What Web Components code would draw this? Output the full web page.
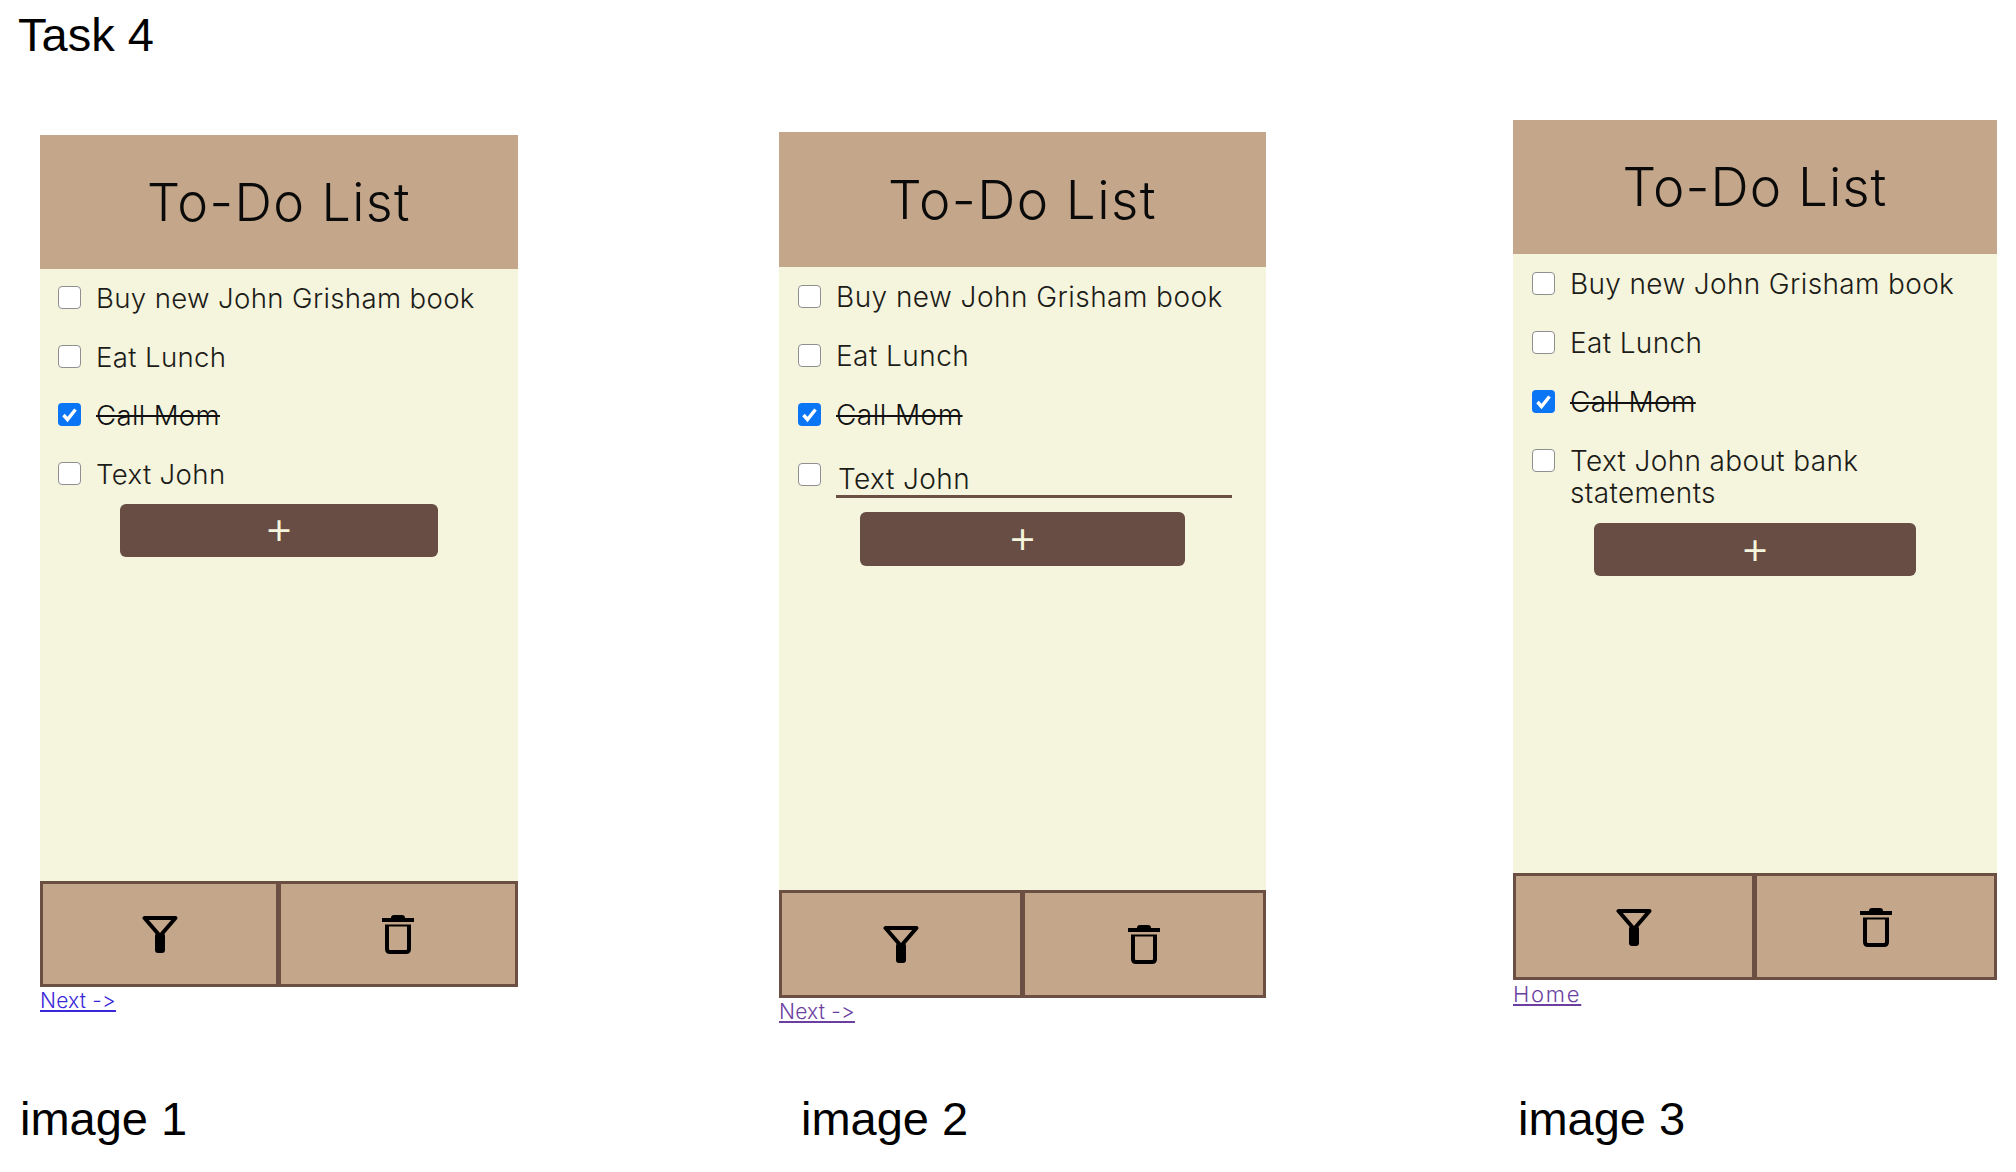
<!DOCTYPE html>
<html lang="en">

<head>
    <meta charset="UTF-8" />
    <title>Task 4</title>
    <style>
        html, body { margin: 0; background: #fff; }
    </style>
</head>

<body>
    <task-page heading="Task 4">
        <shot-column label="image 1" style="--col: 779px; --top: 15px; --label-x: 20px;">
            <todo-screen style="--w: 478px; --h: 852px; --head: 134px; --foot: 106px; --gap: 26.5px; --list-top: 13px; --inset: 18px; --btn: 318px; --btn-h: 53px; --title: 52px; --title-ls: 1.4px; --item: 27.6px; --item-ls: 0.35px;">
                <todo-item>Buy new John Grisham book</todo-item>
                <todo-item>Eat Lunch</todo-item>
                <todo-item checked>Call Mom</todo-item>
                <todo-item>Text John</todo-item>
                <a slot="link" href="#next">Next -&gt;</a>
            </todo-screen>
        </shot-column>
        <shot-column label="image 2" style="--col: 734px; --top: 12px; --label-x: 22px;">
            <todo-screen visited style="--w: 487px; --h: 866px; --head: 135px; --foot: 108px; --gap: 27px; --list-top: 14px; --inset: 19px; --btn: 325px; --btn-h: 54px; --title: 53px; --title-ls: 1.4px; --item: 28px; --item-ls: 0.45px;">
                <todo-item>Buy new John Grisham book</todo-item>
                <todo-item>Eat Lunch</todo-item>
                <todo-item checked>Call Mom</todo-item>
                <todo-item editing>Text John</todo-item>
                <a slot="link" href="#next">Next -&gt;</a>
            </todo-screen>
        </shot-column>
        <shot-column label="image 3" style="--col: 503px; --top: 0px; --label-x: 5px;">
            <todo-screen visited style="--w: 484px; --h: 860px; --head: 134px; --foot: 107px; --gap: 27px; --list-top: 14px; --inset: 19px; --btn: 322px; --btn-h: 53px; --title: 53px; --title-ls: 1px; --item: 28px; --item-ls: 0.35px;">
                <todo-item>Buy new John Grisham book</todo-item>
                <todo-item>Eat Lunch</todo-item>
                <todo-item checked>Call Mom</todo-item>
                <todo-item>Text John about bank statements</todo-item>
                <a slot="link" href="#home" style="font-size: 22px; letter-spacing: 1.75px;">Home</a>
            </todo-screen>
        </shot-column>
    </task-page>

    <template id="page-template">
        <style>
            :host {
                display: block;
                width: 2016px;
                height: 1172px;
                overflow: hidden;
                font-family: "Liberation Sans", Arial, sans-serif;
                color: #000;
            }

            h1 {
                margin: 0;
                height: 120px;
                padding: 9px 0 0 18px;
                box-sizing: border-box;
                font-size: 47px;
                line-height: 52px;
                font-weight: 400;
            }

            .row {
                display: flex;
                align-items: stretch;
                height: 1026px;
            }
        </style>
        <h1></h1>
        <div class="row"><slot></slot></div>
    </template>

    <template id="column-template">
        <style>
            :host {
                display: flex;
                flex-direction: column;
                justify-content: space-between;
                width: var(--col);
                padding-top: var(--top);
                box-sizing: border-box;
            }

            :host(:first-child) {
                padding-left: 40px;
            }

            .label {
                margin-left: var(--label-x);
                font-size: 47px;
                line-height: 54px;
            }

            :host(:first-child) .label {
                margin-left: -20px;
            }
        </style>
        <div><slot></slot></div>
        <div class="label"></div>
    </template>

    <template id="screen-template">
        <style>
            :host {
                display: block;
                width: var(--w);
                font-family: Inter, "Open Sans", sans-serif;
            }

            .phone {
                display: flex;
                flex-direction: column;
                height: var(--h);
                background: #f5f4dd;
            }

            header {
                flex: none;
                height: var(--head);
                display: flex;
                align-items: center;
                justify-content: center;
                background: #c4a68a;
                font-size: var(--title);
                font-weight: 300;
                letter-spacing: var(--title-ls);
                color: #0a0a0a;
            }

            main {
                flex: 1;
                display: flex;
                flex-direction: column;
                gap: var(--gap);
                padding-top: var(--list-top);
                padding-left: var(--inset);
                padding-right: 30px;
                font-size: var(--item);
                letter-spacing: var(--item-ls);
            }

            .add {
                flex: none;
                align-self: center;
                /* the list padding is lopsided, so pull the button back to the centre */
                position: relative;
                left: calc((30px - var(--inset)) / 2);
                margin-top: calc(14px - var(--gap));
                width: var(--btn);
                height: var(--btn-h);
                display: flex;
                align-items: center;
                justify-content: center;
                border: 0;
                padding: 0 0 6px;
                border-radius: 6px;
                background: #674d43;
                color: #f5f4dd;
                font-family: Inter, sans-serif;
                font-weight: 300;
                font-size: 46px;
                line-height: 46px;
            }

            todo-toolbar {
                height: var(--foot);
            }

            ::slotted(a) {
                display: block;
                width: max-content;
                margin-top: 2px;
                font-size: 21px;
                line-height: 24px;
                font-weight: 300;
                letter-spacing: 0.2px;
                font-variant-ligatures: none;
                font-feature-settings: "calt" 0;
                color: #3a27d8;
            }

            :host([visited]) ::slotted(a) {
                color: #6b3fa0;
            }
        </style>
        <div class="phone">
            <header>To-Do List</header>
            <main>
                <slot></slot>
                <button class="add">+</button>
            </main>
            <todo-toolbar></todo-toolbar>
        </div>
        <slot name="link"></slot>
    </template>

    <template id="item-template">
        <style>
            :host {
                display: flex;
                align-items: flex-start;
                gap: 15px;
                line-height: 32px;
                font-weight: 300;
                color: #1c1c18;
            }

            .box {
                flex: none;
                width: 23px;
                height: 23px;
                margin-top: 4px;
                box-sizing: border-box;
                display: flex;
                border: 1.5px solid #8f8f8f;
                border-radius: 4px;
                background: #fff;
            }

            svg {
                display: none;
                width: 100%;
                height: 100%;
            }

            :host([checked]) .box {
                border: 0;
                background: #0a76f6;
            }

            :host([checked]) svg {
                display: block;
            }

            :host([checked]) .text {
                text-decoration: line-through;
                text-decoration-thickness: 2px;
                color: #111;
            }

            :host([editing]) .box {
                margin-top: 5px;
            }

            :host([editing]) .text {
                flex: 1;
                margin-right: 4px;
                padding: 5px 0 0 2px;
                border-bottom: 3px solid #6b4f43;
            }
        </style>
        <span class="box">
            <svg viewBox="0 0 23 23"><path d="M5.5 12l4 4.5 8-10" fill="none" stroke="#fff" stroke-width="3.4" /></svg>
        </span>
        <span class="text"><slot></slot></span>
    </template>

    <template id="toolbar-template">
        <style>
            :host {
                flex: none;
                display: grid;
                grid-template-columns: 1fr 1fr;
                background: #c4a68a;
            }

            div {
                display: flex;
                align-items: center;
                justify-content: center;
                border: 3px solid #6b4f43;
            }

            div + div {
                border-left-width: 2px;
            }

            svg {
                display: block;
            }
        </style>
        <div>
            <svg width="36" height="38" viewBox="0 0 36 38">
                <path d="M2.5 3h31L18 21z" fill="none" stroke="#000" stroke-width="4" stroke-linejoin="round" />
                <rect x="13" y="18" width="10" height="20" rx="3" fill="#000" />
            </svg>
        </div>
        <div>
            <svg width="32" height="40" viewBox="0 0 32 40">
                <path d="M0 4h32v4H0zM9 4q0-3 3-3h8q3 0 3 3z" fill="#000" />
                <path d="M5 12v23q0 3 3 3h16q3 0 3-3V12" fill="none" stroke="#000" stroke-width="4" />
                <path d="M3 11.5h26" stroke="#000" stroke-width="2" />
            </svg>
        </div>
    </template>

    <script>
        // shadow 붙이고 템플릿 복제하는 공통 부분
        class TemplateElement extends HTMLElement {
            constructor(templateId) {
                super();
                this.attachShadow({ mode: 'open' });
                const template = document.getElementById(templateId);
                this.shadowRoot.appendChild(template.content.cloneNode(true));
            }
        }

        class TaskPage extends TemplateElement {
            constructor() { super('page-template'); }

            connectedCallback() {
                this.shadowRoot.querySelector('h1').textContent = this.getAttribute('heading');
            }
        }

        class ShotColumn extends TemplateElement {
            constructor() { super('column-template'); }

            connectedCallback() {
                this.shadowRoot.querySelector('.label').textContent = this.getAttribute('label');
            }
        }

        class TodoScreen extends TemplateElement {
            constructor() { super('screen-template'); }
        }

        class TodoItem extends TemplateElement {
            constructor() { super('item-template'); }
        }

        class TodoToolbar extends TemplateElement {
            constructor() { super('toolbar-template'); }
        }

        customElements.define('task-page', TaskPage);
        customElements.define('shot-column', ShotColumn);
        customElements.define('todo-screen', TodoScreen);
        customElements.define('todo-item', TodoItem);
        customElements.define('todo-toolbar', TodoToolbar);
    </script>
</body>

</html>
